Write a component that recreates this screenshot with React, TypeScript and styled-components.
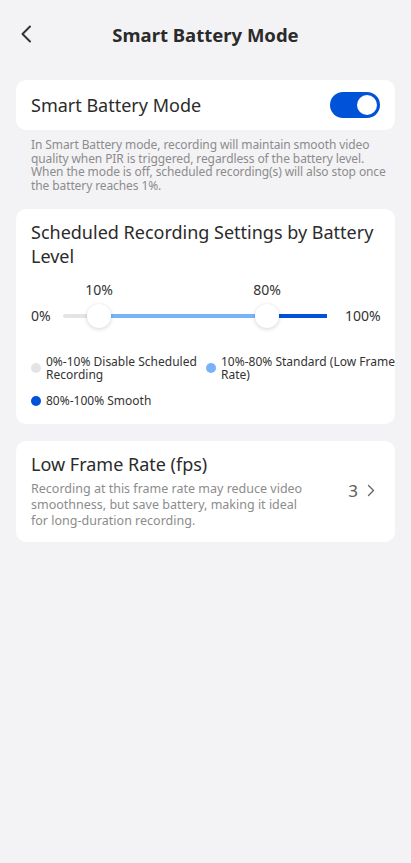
import styled, { createGlobalStyle } from "styled-components";

const GlobalStyle = createGlobalStyle`
  body {
    margin: 0;
    background: #f3f3f5;
    font-family: "Noto Sans", "Liberation Sans", sans-serif;
    color: #222;
  }
`;

const Page = styled.div`
  min-height: 863px;
  padding: 0 16px 24px;
  box-sizing: border-box;
`;

const Header = styled.div`
  height: 68px;
  display: grid;
  grid-template-columns: 40px 1fr 40px;
  align-items: center;
`;

const BackButton = styled.button`
  border: none;
  background: none;
  padding: 0;
  margin-left: 4px;
  width: 20px;
  height: 24px;
  display: flex;
  align-items: center;
  color: #333;
`;

const Title = styled.h1`
  margin: 0;
  text-align: center;
  font-size: 18.5px;
  font-weight: 700;
  color: #2b2b2b;
`;

const Card = styled.div<{ $pad?: string }>`
  background: #fff;
  border-radius: 10px;
  padding: ${(p) => p.$pad || "0 15px"};
  box-sizing: border-box;
`;

const SwitchCard = styled(Card)`
  margin-top: 12px;
  height: 50px;
  display: flex;
  align-items: center;
  justify-content: space-between;
`;

const RowLabel = styled.div`
  font-size: 18px;
  line-height: 24px;
  color: #2b2b2b;
`;

const Toggle = styled.div<{ $on: boolean }>`
  width: 50px;
  height: 26px;
  border-radius: 13px;
  background: ${(p) => (p.$on ? "#0052d9" : "#dcdcdc")};
  display: flex;
  align-items: center;
  justify-content: ${(p) => (p.$on ? "flex-end" : "flex-start")};
  padding: 0 3px;
  box-sizing: border-box;
`;

const Knob = styled.div`
  width: 20px;
  height: 20px;
  border-radius: 50%;
  background: #fff;
`;

const Note = styled.p`
  margin: 8px 8px 0 15px;
  font-size: 12px;
  line-height: 13.5px;
  letter-spacing: -0.1px;
  color: #8c8c8c;
`;

const LevelCard = styled(Card)`
  margin-top: 17px;
  padding: 11px 15px 17px;
`;

const SliderWrap = styled.div`
  margin-top: 12px;
  padding-top: 26px;
  display: flex;
  align-items: center;
  gap: 12px;
`;

const EndLabel = styled.span`
  font-size: 14px;
  color: #333;
  width: 20px;
  &:last-child {
    width: 35px;
    margin-left: 6px;
  }
`;

const Track = styled.div`
  position: relative;
  flex: 1;
  height: 4px;
  border-radius: 2px;
  display: flex;
`;

const Segment = styled.div<{ $color: string }>`
  height: 100%;
  background: ${(p) => p.$color};
  &:first-child {
    border-radius: 2px 0 0 2px;
  }
  &:last-child {
    border-radius: 0 2px 2px 0;
  }
`;

const Thumb = styled.div`
  position: absolute;
  top: 50%;
  width: 24px;
  height: 24px;
  margin-left: -12px;
  margin-top: -12px;
  border-radius: 50%;
  background: #fff;
  box-shadow: 0 1px 4px rgba(0, 0, 0, 0.18);
`;

const ThumbLabel = styled.span`
  position: absolute;
  top: -24px;
  left: 50%;
  transform: translateX(-50%);
  font-size: 14px;
  color: #333;
`;

const Legend = styled.div`
  margin-top: 30px;
  display: grid;
  grid-template-columns: 175px 1fr;
  row-gap: 13px;
  margin-right: -20px;
`;

const LegendItem = styled.div`
  display: flex;
  align-items: center;
  gap: 5px;
  font-size: 12px;
  line-height: 13px;
  color: #333;
`;

const Dot = styled.span<{ $color: string }>`
  flex: none;
  width: 10px;
  height: 10px;
  border-radius: 50%;
  background: ${(p) => p.$color};
`;

const FpsCard = styled(Card)`
  margin-top: 17px;
  padding: 11px 15px 13px;
  display: flex;
  align-items: center;
  justify-content: space-between;
`;

const FpsText = styled.div`
  display: flex;
  flex-direction: column;
`;

const FpsDesc = styled.p`
  margin: 5px 0 0;
  width: 285px;
  font-size: 12.5px;
  line-height: 16px;
  color: #8c8c8c;
`;

const Value = styled.div`
  display: flex;
  align-items: center;
  gap: 9px;
  font-size: 17px;
  color: #5c5c5c;
  margin-right: 5px;
`;

const GRAY = "#e4e4e6";
const LIGHT = "#79b3f7";
const DARK = "#0052d9";

const low = 10;
const high = 80;
// thumbs travel inside the track, inset by their radius
const pos = (v: number) => `calc(12px + (100% - 24px) * ${v / 100})`;

const App = () => {
  return (
    <Page>
      <GlobalStyle />
      <Header>
        <BackButton aria-label="back">
          <svg width="12" height="18" viewBox="0 0 12 18" fill="none">
            <path d="M10 1.5L2.5 9L10 16.5" stroke="#333" strokeWidth="2" strokeLinecap="round" strokeLinejoin="round" />
          </svg>
        </BackButton>
        <Title>Smart Battery Mode</Title>
        <span />
      </Header>

      <SwitchCard>
        <RowLabel>Smart Battery Mode</RowLabel>
        <Toggle $on>
          <Knob />
        </Toggle>
      </SwitchCard>
      <Note>
        In Smart Battery mode, recording will maintain smooth video quality when PIR is triggered,
        regardless of the battery level. When the mode is off, scheduled recording(s) will also stop
        once the battery reaches 1%.
      </Note>

      <LevelCard>
        <RowLabel>Scheduled Recording Settings by Battery Level</RowLabel>
        <SliderWrap>
          <EndLabel>0%</EndLabel>
          <Track>
            <Segment $color={GRAY} style={{ width: pos(low) }} />
            <Segment $color={LIGHT} style={{ width: `calc((100% - 24px) * ${(high - low) / 100})` }} />
            <Segment $color={DARK} style={{ flex: 1 }} />
            <Thumb style={{ left: pos(low) }}>
              <ThumbLabel>{low}%</ThumbLabel>
            </Thumb>
            <Thumb style={{ left: pos(high) }}>
              <ThumbLabel>{high}%</ThumbLabel>
            </Thumb>
          </Track>
          <EndLabel>100%</EndLabel>
        </SliderWrap>
        <Legend>
          <LegendItem>
            <Dot $color={GRAY} />
            <span>0%-10% Disable Scheduled Recording</span>
          </LegendItem>
          <LegendItem>
            <Dot $color={LIGHT} />
            <span>10%-80% Standard (Low Frame Rate)</span>
          </LegendItem>
          <LegendItem>
            <Dot $color={DARK} />
            <span>80%-100% Smooth</span>
          </LegendItem>
        </Legend>
      </LevelCard>

      <FpsCard>
        <FpsText>
          <RowLabel>Low Frame Rate (fps)</RowLabel>
          <FpsDesc>
            Recording at this frame rate may reduce video smoothness, but save battery, making it
            ideal for long-duration recording.
          </FpsDesc>
        </FpsText>
        <Value>
          3
          <svg width="8" height="13" viewBox="0 0 8 13" fill="none">
            <path d="M1.5 1.5L6.5 6.5L1.5 11.5" stroke="#666" strokeWidth="1.4" strokeLinecap="round" strokeLinejoin="round" />
          </svg>
        </Value>
      </FpsCard>
    </Page>
  );
};

export default App;
